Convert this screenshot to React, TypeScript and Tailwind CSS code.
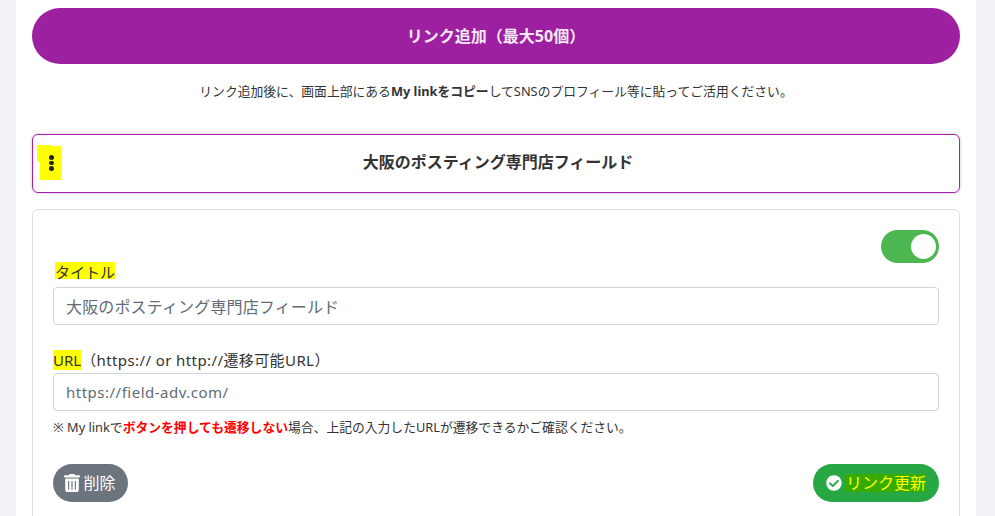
import { FaCheckCircle, FaTrashAlt } from 'react-icons/fa';

const FONT = "font-['Noto_Sans','Noto_Sans_CJK_JP',sans-serif]";

export default function App() {
  return (
    <div className={`h-[516px] overflow-hidden bg-[#f3f1f5] pl-4 pr-[19px] ${FONT}`}>
      <div className="h-full bg-white px-4 pt-2">
        <button className="flex h-14 w-full items-center justify-center rounded-full bg-[#9c20a0] text-base font-bold text-[#f6e9f7]">
          リンク追加（最大50個）
        </button>
        <p className="mt-[18px] text-center text-[12.8px] leading-[18px] text-[#333]">
          リンク追加後に、画面上部にある<b>My linkをコピー</b>してSNSのプロフィール等に貼ってご活用ください。
        </p>

        {/* Sortable link header */}
        <div className="relative mt-[34px] flex h-[59px] items-center justify-center rounded-md border border-[#a81fae] pb-[3px] pl-1 shadow-[0_0_3px_rgba(0,0,0,0.25)]">
          <span className="absolute left-[4px] top-[10px] h-[17px] w-[15px] bg-[#ffff00]" />
          <span className="absolute left-[7px] top-[11px] h-[34px] w-[21px] bg-[#ffff00]" />
          <span className="absolute left-[16px] top-[20px] flex flex-col gap-[1px]">
            <i className="block h-[4.5px] w-[4.5px] rounded-full bg-[#222]" />
            <i className="block h-[4.5px] w-[4.5px] rounded-full bg-[#222]" />
            <i className="block h-[4.5px] w-[4.5px] rounded-full bg-[#222]" />
          </span>
          <span className="text-base font-bold text-[#333]">大阪のポスティング専門店フィールド</span>
        </div>

        <div className="mt-4 h-[400px] rounded-md border border-[#dcdcdc] px-5 pt-5">
          <div className="flex justify-end">
            <div className="flex h-[33px] w-[58px] items-center justify-end rounded-full bg-[#4cb651] pr-[3px]">
              <span className="h-[25px] w-[25px] rounded-full bg-white" />
            </div>
          </div>
          <label className="-mt-[2px] block h-[26px] text-[15px] leading-[22px] text-[#333]">
            <span className="ml-[2px] inline-block h-[17px] bg-[#ffff00] leading-[20px]">タイトル</span>
          </label>
          <input
            readOnly
            value="大阪のポスティング専門店フィールド"
            className="block h-[38px] w-full rounded border border-[#ced4da] px-3 text-base tracking-[0.15px] text-[#5f6b76] outline-none"
          />
          <label className="mt-[22px] block h-[26px] text-[15px] leading-[26px] tracking-[0.4px] text-[#333]">
            <span className="bg-[#ffff00] tracking-normal">URL</span>（https:// or http://遷移可能URL）
          </label>
          <input
            readOnly
            value="https://field-adv.com/"
            className="block h-[38px] w-full rounded border border-[#ced4da] px-3 text-[15px] tracking-[0.5px] text-[#5f6b76] outline-none"
          />
          <p className="mt-1.5 text-[12.8px] leading-[20px] text-[#333]">
            ※ My linkで<b className="text-[#ff0000]">ボタンを押しても遷移しない</b>場合、上記の入力したURLが遷移できるかご確認ください。
          </p>
          <div className="mt-[27px] flex items-center justify-between">
            <button className="flex h-[38px] w-[75px] items-center justify-center gap-[2px] rounded-full bg-[#6c757d] pr-[2px] text-base text-white">
              <FaTrashAlt size={18} />
              削除
            </button>
            <button className="flex h-[38px] w-[126px] items-center justify-center gap-[4px] rounded-full bg-[#28a745] text-base text-[#ffff00]">
              <FaCheckCircle size={16} className="text-white" />
              <span className="bg-[#38ab00] leading-[18px]">リンク更新</span>
            </button>
          </div>
        </div>
      </div>
    </div>
  );
}
